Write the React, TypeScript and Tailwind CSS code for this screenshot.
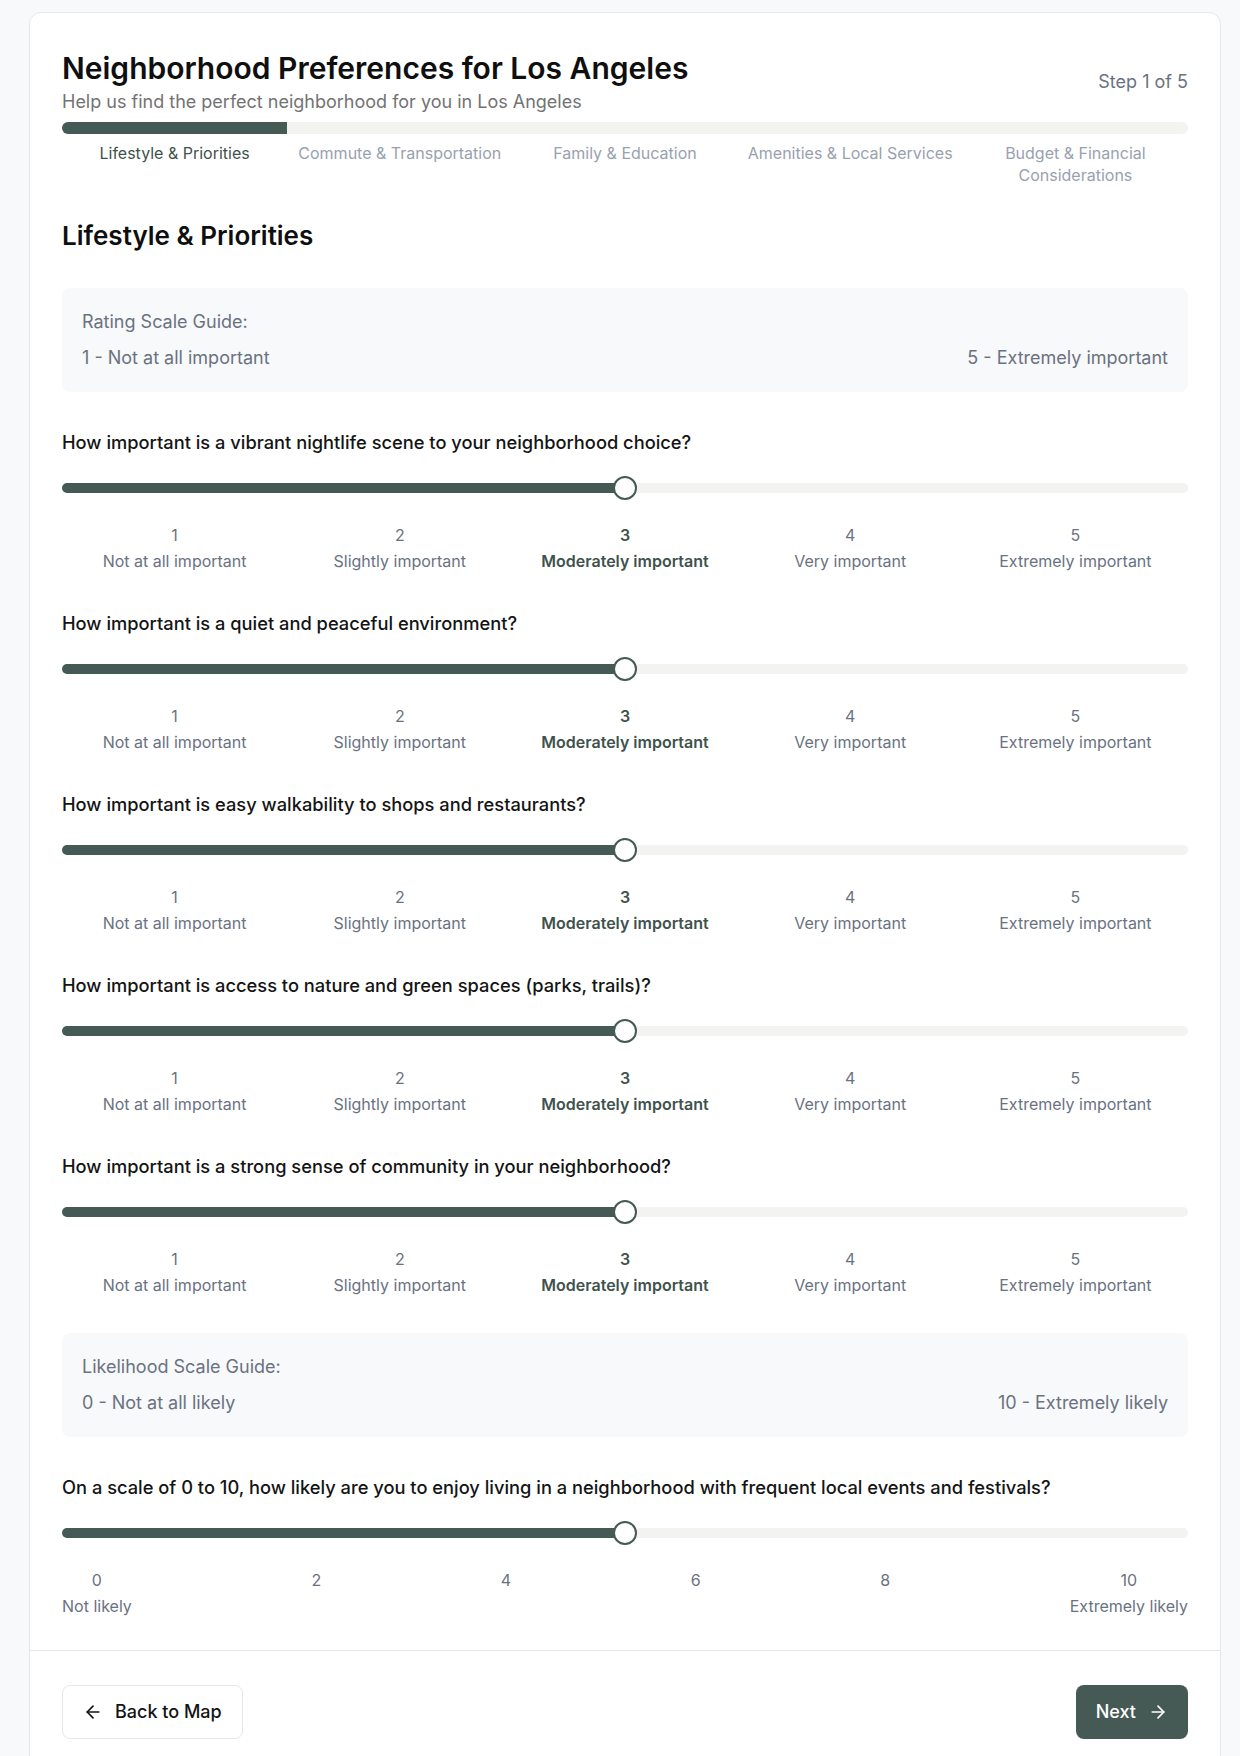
import React from "react";
import { ArrowLeft, ArrowRight } from "lucide-react";

const steps = [
  "Lifestyle & Priorities",
  "Commute & Transportation",
  "Family & Education",
  "Amenities & Local Services",
  "Budget & Financial Considerations",
];

const scale = [
  "Not at all important",
  "Slightly important",
  "Moderately important",
  "Very important",
  "Extremely important",
];

const questions = [
  "How important is a vibrant nightlife scene to your neighborhood choice?",
  "How important is a quiet and peaceful environment?",
  "How important is easy walkability to shops and restaurants?",
  "How important is access to nature and green spaces (parks, trails)?",
  "How important is a strong sense of community in your neighborhood?",
];

const Slider = ({ percent }: { percent: number }) => (
  <div className="relative h-2.5 w-full rounded-full bg-[#f3f3f1]">
    <div
      className="absolute left-0 top-0 h-full rounded-l-full bg-[#465a55]"
      style={{ width: `${percent}%` }}
    />
    <div
      className="absolute top-1/2 h-6 w-6 -translate-x-1/2 -translate-y-1/2 rounded-full border-2 border-[#465a55] bg-white"
      style={{ left: `${percent}%` }}
    />
  </div>
);

const Guide = ({ title, left, right }: { title: string; left: string; right: string }) => (
  <div className="rounded-lg bg-[#f8f9fa] p-5 text-lg text-gray-500">
    <p>{title}</p>
    <div className="mt-2 flex justify-between">
      <span>{left}</span>
      <span>{right}</span>
    </div>
  </div>
);

const RatingQuestion = ({ text }: { text: string }) => (
  <div>
    <p className="text-[18.3px] font-medium leading-7 text-[#141414]">{text}</p>
    <div className="mt-[27px]">
      <Slider percent={50} />
    </div>
    <div className="mt-[30px] grid grid-cols-5 text-center text-base">
      {scale.map((label, i) => (
        <div key={label} className={i === 2 ? "font-semibold text-[#3f524d]" : "text-gray-500"}>
          <div>{i + 1}</div>
          <div className="mt-0.5">{label}</div>
        </div>
      ))}
    </div>
  </div>
);

export default function App() {
  return (
    <div
      className="min-h-screen bg-[#f8f9fb] pl-[29px] pr-[19px] pt-3"
      style={{ fontFamily: "Inter, 'Noto Sans', sans-serif" }}
    >
      <div className="rounded-t-xl border border-gray-200 bg-white">
        <div className="px-8 pt-[35px]">
          <div className="flex items-center justify-between">
            <div>
              <h1 className="text-3xl font-semibold leading-10 text-[#0f0f0f]">
                Neighborhood Preferences for Los Angeles
              </h1>
              <p className="text-lg text-neutral-500">
                Help us find the perfect neighborhood for you in Los Angeles
              </p>
            </div>
            <span className="text-lg text-gray-500">Step 1 of 5</span>
          </div>
          <div className="mt-1.5 h-3 w-full rounded-full bg-[#f3f3f1]">
            <div className="h-full w-1/5 rounded-l-full bg-[#465a55]" />
          </div>
          <div className="mt-2 grid grid-cols-5 text-center text-base leading-[22px]">
            {steps.map((s, i) => (
              <div key={s} className={`px-2 ${i === 0 ? "text-[#3f524d]" : "text-gray-400"}`}>
                {s}
              </div>
            ))}
          </div>
        </div>

        <div className="px-8 pb-8 pt-[34px]">
          <h2 className="text-[26px] font-semibold leading-8 text-[#0f0f0f]">Lifestyle &amp; Priorities</h2>
          <div className="mt-9 flex flex-col gap-9">
            <Guide title="Rating Scale Guide:" left="1 - Not at all important" right="5 - Extremely important" />
            {questions.map((q) => (
              <RatingQuestion key={q} text={q} />
            ))}
            <Guide title="Likelihood Scale Guide:" left="0 - Not at all likely" right="10 - Extremely likely" />
            <div>
              <p className="text-[18.3px] font-medium leading-7 text-[#141414]">
                On a scale of 0 to 10, how likely are you to enjoy living in a neighborhood with frequent local events and festivals?
              </p>
              <div className="mt-[27px]">
                <Slider percent={50} />
              </div>
              <div className="mt-[30px] flex justify-between text-base text-gray-500">
                <div className="text-center">
                  <div>0</div>
                  <div className="mt-0.5">Not likely</div>
                </div>
                <div>2</div>
                <div>4</div>
                <div>6</div>
                <div>8</div>
                <div className="text-center">
                  <div>10</div>
                  <div className="mt-0.5">Extremely likely</div>
                </div>
              </div>
            </div>
          </div>
        </div>

        <div className="flex justify-between border-t border-gray-200 px-8 pb-8 pt-[34px]">
          <button className="flex items-center gap-3 rounded-lg border border-gray-200 bg-white px-5 py-3 text-lg font-medium text-[#141414]">
            <ArrowLeft size={20} />
            Back to Map
          </button>
          <button className="flex items-center gap-3 rounded-lg bg-[#465a55] px-5 py-3 text-lg font-medium text-white">
            Next
            <ArrowRight size={20} />
          </button>
        </div>
      </div>
    </div>
  );
}
